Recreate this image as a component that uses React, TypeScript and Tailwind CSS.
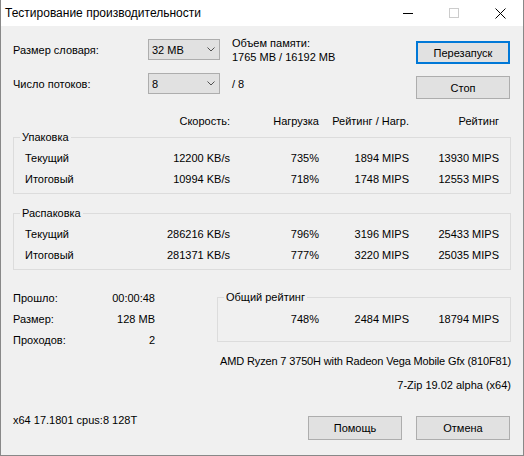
import React from "react";

const font = { fontFamily: '"Liberation Sans", Arial, sans-serif' };

function Chevron() {
  return (
    <svg width="8" height="5" viewBox="0 0 8 5" className="block">
      <polyline points="0.5,0.5 4,4 7.5,0.5" fill="none" stroke="#505050" strokeWidth="1" />
    </svg>
  );
}

function Combo({ value }: { value: string }) {
  return (
    <div className="flex h-[21px] w-[72px] items-center justify-between border border-[#adadad] bg-[#e1e1e1] pl-[3px] pr-[4px] leading-[14px]">
      <span>{value}</span>
      <Chevron />
    </div>
  );
}

function Btn({ label, def }: { label: string; def?: boolean }) {
  return (
    <div
      className={
        "flex h-[23px] w-[94px] items-center justify-center bg-[#e1e1e1] leading-[14px] " +
        (def ? "border-2 border-[#0078d7]" : "border border-[#adadad]")
      }
    >
      {label}
    </div>
  );
}

function Row({ cells }: { cells: string[] }) {
  return (
    <div className="grid h-[21px] grid-cols-[100px_105px_89px_90px_90px] items-center leading-[14px]">
      <div>{cells[0]}</div>
      <div className="text-right">{cells[1]}</div>
      <div className="text-right">{cells[2]}</div>
      <div className="text-right">{cells[3]}</div>
      <div className="text-right">{cells[4]}</div>
    </div>
  );
}

function Group({ title, rows }: { title: string; rows: string[][] }) {
  return (
    <div className="relative h-[57px] w-[498px] border border-[#dcdcdc] pl-[11px] pt-[9px]">
      <div className="absolute left-[6px] top-[-8px] bg-[#f0f0f0] px-[2px] leading-[14px]">{title}</div>
      {rows.map((r, i) => (
        <Row key={i} cells={r} />
      ))}
    </div>
  );
}

export default function App() {
  return (
    <div
      style={font}
      className="flex h-[456px] w-[524px] flex-col border-x border-b border-[#888888] bg-[#f0f0f0] text-[11px] text-black"
    >
      {/* Title bar */}
      <div className="flex h-[26px] items-center bg-white">
        <div className="flex-1 pl-[4px] text-[12px] leading-[14px]">Тестирование производительности</div>
        <div className="flex h-[26px]">
          <div className="flex w-[46px] items-center justify-center">
            <div className="h-px w-[10px] bg-black" />
          </div>
          <div className="flex w-[46px] items-center justify-center">
            <div className="h-[10px] w-[10px] border border-[#cccccc]" />
          </div>
          <div className="flex w-[46px] items-center justify-center">
            <svg width="11" height="11" viewBox="0 0 11 11" className="block">
              <line x1="0.5" y1="0.5" x2="10.5" y2="10.5" stroke="#000" strokeWidth="1" />
              <line x1="10.5" y1="0.5" x2="0.5" y2="10.5" stroke="#000" strokeWidth="1" />
            </svg>
          </div>
        </div>
      </div>

      {/* Body */}
      <div className="flex flex-1 flex-col px-[12px] pt-[13px]">
        {/* Top section */}
        <div className="flex">
          <div className="flex w-[135px] flex-col gap-[13px]">
            <div className="flex h-[21px] items-center leading-[14px]">Размер словаря:</div>
            <div className="flex h-[21px] items-center leading-[14px]">Число потоков:</div>
          </div>
          <div className="flex w-[72px] flex-col gap-[13px]">
            <Combo value="32 MB" />
            <Combo value="8" />
          </div>
          <div className="ml-[12px] flex w-[184px] flex-col gap-[13px]">
            <div className="h-[21px]">
              <div className="mt-[-3px] leading-[14px]">Объем памяти:</div>
              <div className="leading-[14px]">1765 MB / 16192 MB</div>
            </div>
            <div className="flex h-[21px] items-center leading-[14px]">/ 8</div>
          </div>
          <div className="flex w-[94px] flex-col pt-[2px]">
            <Btn label="Перезапуск" def />
            <div className="mt-[12px]">
              <Btn label="Стоп" />
            </div>
          </div>
        </div>

        {/* Header */}
        <div className="mt-[15px] grid h-[14px] grid-cols-[100px_105px_89px_90px_90px] pl-[12px] leading-[14px]">
          <div />
          <div className="text-right">Скорость:</div>
          <div className="text-right">Нагрузка</div>
          <div className="text-right">Рейтинг / Нагр.</div>
          <div className="text-right">Рейтинг</div>
        </div>

        <div className="mt-[9px]">
          <Group
            title="Упаковка"
            rows={[
              ["Текущий", "12200 KB/s", "735%", "1894 MIPS", "13930 MIPS"],
              ["Итоговый", "10994 KB/s", "718%", "1748 MIPS", "12553 MIPS"],
            ]}
          />
        </div>
        <div className="mt-[19px]">
          <Group
            title="Распаковка"
            rows={[
              ["Текущий", "286216 KB/s", "796%", "3196 MIPS", "25433 MIPS"],
              ["Итоговый", "281371 KB/s", "777%", "3220 MIPS", "25035 MIPS"],
            ]}
          />
        </div>

        {/* Bottom stats */}
        <div className="mt-[17px] flex justify-between">
          <div className="flex w-[142px] flex-col">
            {[
              ["Прошло:", "00:00:48"],
              ["Размер:", "128 MB"],
              ["Проходов:", "2"],
            ].map(([a, b]) => (
              <div key={a} className="flex h-[21px] items-center justify-between leading-[14px]">
                <span>{a}</span>
                <span>{b}</span>
              </div>
            ))}
          </div>
          <div className="relative mt-[10px] h-[45px] w-[294px] border border-[#dcdcdc] pt-[10px]">
            <div className="absolute left-[6px] top-[-8px] bg-[#f0f0f0] px-[2px] leading-[14px]">Общий рейтинг</div>
            <div className="grid h-[21px] grid-cols-[101px_90px_90px] items-center leading-[14px]">
              <div className="text-right">748%</div>
              <div className="text-right">2484 MIPS</div>
              <div className="text-right">18794 MIPS</div>
            </div>
          </div>
        </div>

        <div className="mt-[4px] text-right leading-[14px] tracking-[-0.15px]">
          AMD Ryzen 7 3750H with Radeon Vega Mobile Gfx (810F81)
        </div>
        <div className="mt-[10px] text-right leading-[14px]">7-Zip 19.02 alpha (x64)</div>

        <div className="mt-[21px] flex items-start justify-between">
          <div className="leading-[14px]">x64 17.1801 cpus:8 128T</div>
          <div className="mr-[1px] mt-[3px] flex gap-[14px]">
            <div className="flex h-[24px] w-[94px] items-center justify-center border border-[#adadad] bg-[#e1e1e1] leading-[14px]">
              Помощь
            </div>
            <div className="flex h-[24px] w-[94px] items-center justify-center border border-[#adadad] bg-[#e1e1e1] leading-[14px]">
              Отмена
            </div>
          </div>
        </div>
      </div>
    </div>
  );
}
